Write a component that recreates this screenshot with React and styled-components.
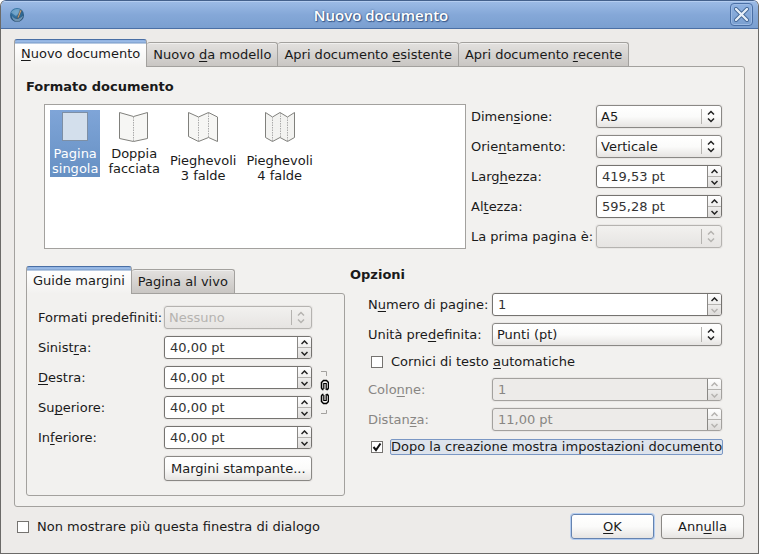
import React, { useState } from 'react';
import styled, { createGlobalStyle, css } from 'styled-components';

// "_" marks the letter that is underlined as keyboard shortcut
function Mnemonic({ text }) {
  const i = text.indexOf('_');
  if (i < 0) return text;
  return (
    <>
      {text.slice(0, i)}
      <Key>{text[i + 1]}</Key>
      {text.slice(i + 2)}
    </>
  );
}

function Combo({ id, options, disabled }) {
  return (
    <ComboBox>
      <Select id={id} disabled={disabled}>
        {options.map((o) => (
          <option key={o}>{o}</option>
        ))}
      </Select>
      <ComboArrows $disabled={disabled} width="21" height="15" viewBox="0 0 21 15">
        <path d="M0.5 0V15" stroke="#b5b3b0" />
        <path d="M7 5.5L10 2.5L13 5.5M7 9.5L10 12.5L13 9.5" strokeWidth="1.5" />
      </ComboArrows>
    </ComboBox>
  );
}

function Spin({ id, value, disabled, atMin }) {
  const [text, setText] = useState(value);

  return (
    <SpinBox $disabled={disabled}>
      <SpinInput id={id} value={text} disabled={disabled} onChange={(e) => setText(e.target.value)} />
      <Steps>
        <Step type="button" aria-label="Aumenta" disabled={disabled}>
          <svg width="7" height="5" viewBox="0 0 7 5"><path d="M0.5 4L3.5 1L6.5 4" /></svg>
        </Step>
        <Step type="button" aria-label="Diminuisci" disabled={disabled || atMin}>
          <svg width="7" height="5" viewBox="0 0 7 5"><path d="M0.5 1L3.5 4L6.5 1" /></svg>
        </Step>
      </Steps>
    </SpinBox>
  );
}

function Field({ id, label, disabled, children }) {
  return (
    <>
      <Label htmlFor={id} $disabled={disabled}><Mnemonic text={label} /></Label>
      {children}
    </>
  );
}

function Check({ id, label, checked, focused }) {
  return (
    <CheckRow>
      <CheckInput id={id} type="checkbox" defaultChecked={checked} />
      <CheckLabel htmlFor={id} $focused={focused}><Mnemonic text={label} /></CheckLabel>
    </CheckRow>
  );
}

function TabBar({ tabs }) {
  return (
    <Tabs role="tablist">
      {tabs.map((t, i) => (
        <Tab key={t} type="button" role="tab" aria-selected={i === 0} $active={i === 0}>
          <Mnemonic text={t} />
        </Tab>
      ))}
    </Tabs>
  );
}

function AppIcon() {
  return (
    <svg width="16" height="16" viewBox="0 0 16 16">
      <defs>
        <radialGradient id="globe" cx="45%" cy="30%" r="70%">
          <stop offset="0" stopColor="#4b93c4" />
          <stop offset="0.6" stopColor="#2d6794" />
          <stop offset="1" stopColor="#274a6b" />
        </radialGradient>
      </defs>
      <circle cx="8" cy="8" r="7" fill="url(#globe)" />
      <path d="M2 5.5C4 2 9 1 12.5 3.5L9 7L7 9Z" fill="#8fb9d8" opacity="0.6" />
      <path d="M3 9C6 13 10 13 14 8.5C13.5 12.5 10.5 14.5 8 14.5C5.5 14.5 3 12 3 9Z" fill="#9dbbd3" opacity="0.6" />
      <path d="M11.2 3L12.6 3.6L9.8 10.5L8.6 11.6L8.8 9.6Z" fill="#e0b98a" stroke="#4a4038" strokeWidth="0.5" />
    </svg>
  );
}

function ChainIcon() {
  return (
    <Chain width="12" height="44" viewBox="0 0 12 44">
      <path d="M4 0.5H9.5V5M9.5 39V42.5H4" stroke="#a3a19e" fill="none" />
      <path d="M6.5 18.5H5.5L4.5 17V11.5L6.5 9.5H9.5L11.5 11.5V17L10.5 18.5H9.5" stroke="#000" strokeWidth="1.5" fill="none" />
      <path d="M6.8 18V12.5H9.2V19" stroke="#000" strokeWidth="1.2" fill="none" />
      <path d="M6.5 23.5H5.5L4.5 25V30.5L6.5 32.5H9.5L11.5 30.5V25L10.5 23.5H9.5" stroke="#000" strokeWidth="1.5" fill="none" />
      <path d="M6.8 24V29.5H9.2V23" stroke="#000" strokeWidth="1.2" fill="none" />
    </Chain>
  );
}

const layouts = [
  {
    name: 'Pagina singola',
    height: 36,
    art: <rect x="3.5" y="2.5" width="25" height="28" fill="#d3dfec" stroke="#7d8fa5" />,
  },
  {
    name: 'Doppia facciata',
    height: 36,
    art: (
      <>
        <path d="M1.5 2.5L15.5 6.5L29.5 2.5V28.5L15.5 31.5L1.5 28.5Z" fill="#f6f6f4" stroke="#80807c" />
        <path d="M15.5 7V31" stroke="#aaa" strokeDasharray="1.5 1" />
      </>
    ),
  },
  {
    name: 'Pieghevoli 3 falde',
    height: 43,
    art: (
      <>
        <path d="M1.5 2.5L11.5 7L21.5 2.5L30.5 7V31.5L21.5 27.5L11.5 31.5L1.5 26.5Z" fill="#f6f6f4" stroke="#80807c" />
        <path d="M11.5 7V31M21.5 3V27" stroke="#aaa" strokeDasharray="1.5 1" />
      </>
    ),
  },
  {
    name: 'Pieghevoli 4 falde',
    height: 43,
    art: (
      <>
        <path d="M1.5 2.5L8.5 7L16 2.5L23.5 7L30.5 2.5V27.5L23.5 31.5L16 27.5L8.5 31.5L1.5 27.5Z" fill="#f2f2f0" stroke="#80807c" />
        <path d="M8.5 7V31M16.5 3V27M23.5 7V31" stroke="#aaa" strokeDasharray="1.5 1" />
      </>
    ),
  },
];

function App() {
  const [layout, setLayout] = useState(layouts[0].name);

  return (
    <>
      <GlobalStyle />
      <Dialog>
        <TitleBar>
          <AppIcon />
          <Title>Nuovo documento</Title>
          <CloseButton type="button" aria-label="Chiudi">
            <svg width="15" height="15" viewBox="0 0 15 15">
              <path d="M2 2L13 13M13 2L2 13" stroke="#3f6494" strokeWidth="4" strokeLinecap="round" />
              <path d="M2 2L13 13M13 2L2 13" stroke="#e6eef8" strokeWidth="2.4" strokeLinecap="round" />
            </svg>
          </CloseButton>
        </TitleBar>

        <Content>
          <TabBar tabs={['_Nuovo documento', 'Nuovo _da modello', 'Apri documento _esistente', 'Apri documento _recente']} />
          <MainPane>
            <Heading>Formato documento</Heading>
            <FormatRow>
              <LayoutList>
                {layouts.map((l) => (
                  <LayoutItem
                    key={l.name}
                    type="button"
                    $selected={l.name === layout}
                    onClick={() => setLayout(l.name)}
                  >
                    <svg width="32" height={l.height} viewBox={`0 0 32 ${l.height}`}>{l.art}</svg>
                    <span>{l.name}</span>
                  </LayoutItem>
                ))}
              </LayoutList>
              <SizeFields>
                <Field id="size" label="Dimen_sione:">
                  <Combo id="size" options={['A5', 'A4', 'A3']} />
                </Field>
                <Field id="orientation" label="Orie_ntamento:">
                  <Combo id="orientation" options={['Verticale', 'Orizzontale']} />
                </Field>
                <Field id="width" label="Larg_hezza:">
                  <Spin id="width" value="419,53 pt" />
                </Field>
                <Field id="height" label="Al_tezza:">
                  <Spin id="height" value="595,28 pt" />
                </Field>
                <Field id="first" label="La prima pagina è:">
                  <Combo id="first" options={['']} disabled />
                </Field>
              </SizeFields>
            </FormatRow>

            <LowerRow>
              <div>
                <TabBar tabs={['Guide margini', 'Pagina al vivo']} />
                <MarginPane>
                  <Field id="preset" label="Formati predefiniti:">
                    <Combo id="preset" options={['Nessuno']} disabled />
                  </Field>
                  <Field id="left" label="Sinist_ra:">
                    <Spin id="left" value="40,00 pt" />
                  </Field>
                  <Field id="right" label="_Destra:">
                    <Spin id="right" value="40,00 pt" />
                  </Field>
                  <Field id="top" label="Su_periore:">
                    <Spin id="top" value="40,00 pt" />
                  </Field>
                  <Field id="bottom" label="In_feriore:">
                    <Spin id="bottom" value="40,00 pt" />
                  </Field>
                  <PrinterButton type="button">Margini stampante...</PrinterButton>
                  <ChainIcon />
                </MarginPane>
              </div>

              <Options>
                <Heading>Opzioni</Heading>
                <OptionFields>
                  <Field id="pages" label="N_umero di pagine:">
                    <Spin id="pages" value="1" atMin />
                  </Field>
                  <Field id="unit" label="Unità pre_definita:">
                    <Combo id="unit" options={['Punti (pt)', 'Millimetri (mm)']} />
                  </Field>
                  <Check id="frames" label="Cornici di testo _automatiche" />
                  <Field id="columns" label="Colo_nne:" disabled>
                    <Spin id="columns" value="1" disabled />
                  </Field>
                  <Field id="gap" label="Distan_za:" disabled>
                    <Spin id="gap" value="11,00 pt" disabled />
                  </Field>
                  <Check id="settings" label="Dopo la creazione mostra impostazioni documento" checked focused />
                </OptionFields>
              </Options>
            </LowerRow>
          </MainPane>

          <Footer>
            <Check id="hide" label="Non mostrare più questa finestra di dialogo" />
            <Buttons>
              <Button type="button" $primary><Mnemonic text="_OK" /></Button>
              <Button type="button"><Mnemonic text="Ann_ulla" /></Button>
            </Buttons>
          </Footer>
        </Content>
      </Dialog>
    </>
  );
}

export default App;

const GlobalStyle = createGlobalStyle`
  * {
    box-sizing: border-box;
  }

  body {
    margin: 0;
    background: #fff;
  }

  body, button, input, select {
    font-family: "DejaVu Sans", sans-serif;
    font-size: 13px;
    line-height: 15px;
    color: #1a1a1a;
  }

  svg {
    display: block;
  }
`;

const Dialog = styled.div`
  display: flex;
  flex-direction: column;
  min-height: 100vh;
  border: 1px solid #6b6a68;
  border-top-color: #44618c;
  border-radius: 6px 6px 0 0;
  background: #edebe9;
  overflow: hidden;
`;

const TitleBar = styled.header`
  display: grid;
  grid-template-columns: 1fr auto 1fr;
  align-items: center;
  height: 28px;
  padding: 0 5px 0 8px;
  border-bottom: 1px solid #4a6fa5;
  background: linear-gradient(#9dbce6, #85a8d8 50%, #7a9fd0);
  box-shadow: inset 0 1px #b4cdf0;
`;

const Title = styled.h1`
  margin: 0;
  font-family: "Open Sans", "Noto Sans", sans-serif;
  font-size: 15px;
  font-weight: 600;
  line-height: 18px;
  color: #fff;
  text-shadow: 0 0 2px #38598a, 1px 1px 1px #38598a;
`;

const CloseButton = styled.button`
  display: flex;
  justify-content: center;
  align-items: center;
  justify-self: end;
  width: 23px;
  height: 23px;
  padding: 0;
  border: 1px solid #4a6fa5;
  border-radius: 4px;
  background: linear-gradient(#8fb2e2, #7a9fd0);
  box-shadow: inset 0 0 0 1px #9dbbe4;
`;

const Content = styled.main`
  flex: 1;
  padding: 10px 13px 12px;
`;

const Tabs = styled.div`
  display: flex;
  align-items: flex-end;
`;

const Tab = styled.button`
  height: 24px;
  padding: 0 6px;
  border: 1px solid #a3a19e;
  border-width: 1px 1px 0 0;
  border-radius: 3px 3px 0 0;
  background: linear-gradient(#e3e1df, #c9c6c3);
  box-shadow: inset 0 1px #f0efee;
  white-space: nowrap;

  ${(p) => p.$active && css`
    height: 28px;
    margin-bottom: -1px;
    border-width: 1px;
    border-bottom: 0;
    border-top-color: #4a6fa5;
    background: linear-gradient(#8fb2e2 0, #9dbce6 2px, #7195c4 3px, #fff 4px, #f2f1ef);
    box-shadow: none;
    z-index: 1;
  `}
`;

const Pane = styled.section`
  border: 1px solid #a3a19e;
  border-radius: 0 3px 3px 3px;
  background: #f2f1ef;
`;

const MainPane = styled(Pane)`
  padding: 12px 22px 10px 11px;
`;

const Heading = styled.h2`
  margin: 0;
  font-size: 13px;
  line-height: 16px;
`;

const FormatRow = styled.div`
  display: flex;
  gap: 5px;
  margin-top: 9px;
  padding-left: 18px;
`;

const LayoutList = styled.div`
  display: flex;
  flex: 1;
  align-items: flex-start;
  gap: 6px;
  padding: 5px;
  border: 1px solid #a3a19e;
  background: #fff;
`;

const LayoutItem = styled.button`
  display: flex;
  flex-direction: column;
  align-items: center;
  padding: 0 2px 1px;
  border: 0;
  background: ${(p) => (p.$selected ? 'linear-gradient(#7fa5d8, #6690c3)' : 'none')};
  color: ${(p) => (p.$selected ? '#fff' : '#1a1a1a')};

  span {
    width: min-content;
  }
`;

const fields = css`
  display: grid;
  align-content: start;
  align-items: center;
  gap: 7px 5px;
`;

const SizeFields = styled.div`
  ${fields}
  grid-template-columns: 120px 126px;
  padding: 1px 0;
`;

const LowerRow = styled.div`
  display: flex;
  gap: 5px;
  margin-top: 17px;
`;

const MarginPane = styled(Pane)`
  ${fields}
  grid-template-columns: 121px 148px 12px;
  padding: 12px 15px 14px 11px;

  > label {
    grid-column: 1;
  }
`;

const Options = styled.section`
  flex: 1;
  padding-top: 1px;
`;

const OptionFields = styled.div`
  ${fields}
  grid-template-columns: 119px 1fr;
  margin-top: 10px;
  padding-left: 18px;
`;

const Label = styled.label`
  white-space: nowrap;
  color: ${(p) => (p.$disabled ? '#888683' : '#1a1a1a')};
`;

const Key = styled.span`
  text-decoration: underline;
  text-decoration-thickness: 1px;
  text-decoration-skip-ink: none;
  text-underline-offset: 2px;
`;

const ComboBox = styled.div`
  display: grid;
  align-items: center;

  > * {
    grid-area: 1 / 1;
  }
`;

const Select = styled.select`
  appearance: none;
  width: 100%;
  height: 23px;
  padding: 0 24px 0 4px;
  border: 1px solid #8a8885;
  border-radius: 3px;
  background: linear-gradient(#fff, #fbfbfa 50%, #e6e4e2);
  box-shadow: 0 0 0 1px #e9e7e5;

  &:disabled {
    border-color: #b5b3b0;
    background: linear-gradient(#f2f1ef, #e6e4e2);
    color: #b5b3b0;
    opacity: 1;
  }
`;

const ComboArrows = styled.svg`
  justify-self: end;
  pointer-events: none;
  fill: none;
  stroke: ${(p) => (p.$disabled ? '#b5b3b0' : '#222')};
`;

const SpinBox = styled.div`
  display: flex;
  height: 23px;
  border: 1px solid ${(p) => (p.$disabled ? '#a3a19e' : '#757370')};
  border-radius: 3px;
  background: ${(p) => (p.$disabled ? '#edebe9' : '#fff')};
  box-shadow: 0 0 0 1px #e9e7e5;
  overflow: hidden;
`;

const SpinInput = styled.input`
  flex: 1;
  min-width: 0;
  padding: 0 5px;
  border: 0;
  background: none;
  color: #333;

  &:disabled {
    color: #888683;
  }
`;

const Steps = styled.div`
  display: flex;
  flex-direction: column;
  width: 14px;
  border-left: 1px solid #8a8885;
  background: linear-gradient(#fff, #dedcda);
`;

const Step = styled.button`
  display: flex;
  flex: 1;
  justify-content: center;
  align-items: center;
  padding: 0;
  border: 0;
  background: none;

  & + & {
    border-top: 1px solid #b5b3b0;
  }

  path {
    fill: none;
    stroke: #222;
    stroke-width: 1.5;
  }

  &:disabled path {
    stroke: #b5b3b0;
  }
`;

const Chain = styled.svg`
  grid-column: 3;
  grid-row: 3 / 5;
`;

const CheckRow = styled.div`
  display: flex;
  grid-column: 1 / -1;
  align-items: center;
  gap: 7px;
  height: 18px;
  padding-left: 3px;
`;

const CheckInput = styled.input`
  appearance: none;
  flex: none;
  width: 12px;
  height: 12px;
  margin: 0;
  border: 1px solid #757370;
  background: #fff;

  &:checked {
    background: #fff url("data:image/svg+xml,%3Csvg xmlns='http://www.w3.org/2000/svg' viewBox='0 0 10 10'%3E%3Cpath d='M1.5 5L4 8L8.5 1.5' fill='none' stroke='%23111' stroke-width='2'/%3E%3C/svg%3E");
  }
`;

const CheckLabel = styled.label`
  border: 1px solid ${(p) => (p.$focused ? '#7a97c4' : 'transparent')};
  border-radius: 2px;
  background: ${(p) => (p.$focused ? '#dde3ec' : 'none')};
  line-height: 14px;
  white-space: nowrap;
`;

const Footer = styled.footer`
  display: flex;
  align-items: center;
  justify-content: space-between;
  padding: 7px 1px 0 0;
`;

const Buttons = styled.div`
  display: flex;
  gap: 7px;
`;

const Button = styled.button`
  min-width: 83px;
  height: 25px;
  padding: 0 6px;
  border: 1px solid ${(p) => (p.$primary ? '#6583b0' : '#8a8885')};
  border-radius: 3px;
  background: linear-gradient(#fff, #fbfbfa 50%, #e6e4e2);
  box-shadow: 0 0 0 1px ${(p) => (p.$primary ? '#b4cdf0' : '#e9e7e5')};
  white-space: nowrap;
`;

const PrinterButton = styled(Button)`
  grid-column: 2;
`;
